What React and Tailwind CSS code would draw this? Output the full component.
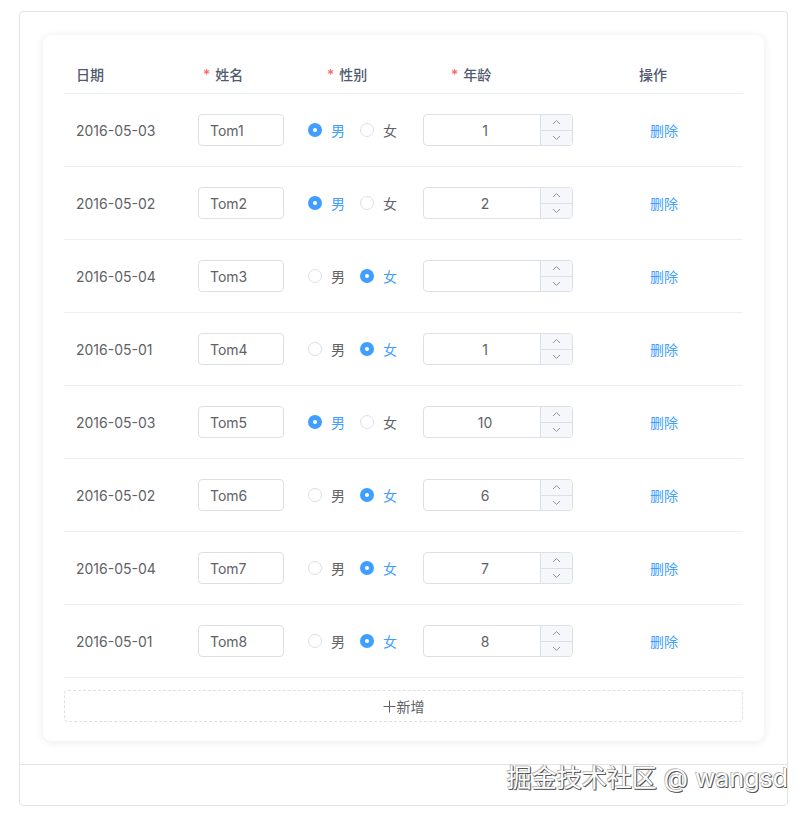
import React, { useState } from "react";

const initialRows = [
  { date: "2016-05-03", name: "Tom1", sex: "male", age: "1" },
  { date: "2016-05-02", name: "Tom2", sex: "male", age: "2" },
  { date: "2016-05-04", name: "Tom3", sex: "female", age: "" },
  { date: "2016-05-01", name: "Tom4", sex: "female", age: "1" },
  { date: "2016-05-03", name: "Tom5", sex: "male", age: "10" },
  { date: "2016-05-02", name: "Tom6", sex: "female", age: "6" },
  { date: "2016-05-04", name: "Tom7", sex: "female", age: "7" },
  { date: "2016-05-01", name: "Tom8", sex: "female", age: "8" },
];

function Required({ children }) {
  return (
    <span>
      <span className="mr-[5px] text-[#f56c6c]">*</span>
      {children}
    </span>
  );
}

function Radio({ checked, label, onClick }) {
  return (
    <label onClick={onClick} className="flex cursor-pointer items-center">
      <span
        className={
          checked
            ? "flex h-[14px] w-[14px] items-center justify-center rounded-full bg-[#409eff]"
            : "h-[14px] w-[14px] rounded-full border border-[#dcdfe6] bg-white"
        }
      >
        {checked && <span className="h-[4px] w-[4px] rounded-full bg-white" />}
      </span>
      <span className={checked ? "ml-[9px] text-[#409eff]" : "ml-[9px] text-[#606266]"}>
        {label}
      </span>
    </label>
  );
}

function Chevron({ up }) {
  return (
    <svg width="9" height="6" viewBox="0 0 9 6" fill="none">
      <path
        d={up ? "M1 5 L4.5 1.5 L8 5" : "M1 1 L4.5 4.5 L8 1"}
        stroke="#909399"
        strokeWidth="1"
      />
    </svg>
  );
}

function NumberInput({ value, onChange }) {
  return (
    <div className="flex h-[32px] w-[150px] overflow-hidden rounded border border-[#dcdfe6] bg-white">
      <input
        value={value}
        onChange={(e) => onChange(e.target.value)}
        className="w-0 flex-1 bg-transparent pl-[6px] text-center text-[14px] text-[#606266] outline-none"
      />
      <div className="flex w-[32px] flex-col border-l border-[#dcdfe6] bg-[#f5f7fa]">
        <button
          onClick={() => onChange(String((Number(value) || 0) + 1))}
          className="flex flex-1 items-center justify-center border-b border-[#dcdfe6]"
        >
          <Chevron up />
        </button>
        <button
          onClick={() => onChange(String(Math.max(0, (Number(value) || 0) - 1)))}
          className="flex flex-1 items-center justify-center"
        >
          <Chevron />
        </button>
      </div>
    </div>
  );
}

function App() {
  const [rows, setRows] = useState(initialRows);

  const update = (i, key, value) => {
    setRows((prev) => prev.map((r, idx) => (idx === i ? { ...r, [key]: value } : r)));
  };

  const remove = (i) => setRows((prev) => prev.filter((_, idx) => idx !== i));

  const add = () =>
    setRows((prev) => [
      ...prev,
      { date: "2016-05-01", name: "Tom" + (prev.length + 1), sex: "male", age: "" },
    ]);

  return (
    <div
      className="min-h-screen bg-white pl-[19px] pt-[11px] text-[14px] text-[#606266]"
      style={{ fontFamily: 'Inter, "Noto Sans CJK SC", sans-serif' }}
    >
      <div className="relative w-[769px] overflow-hidden rounded-sm border border-[#e4e4e4]">
        <div className="px-[23px] pb-[23px] pt-[23px]">
          <div className="rounded-lg bg-white px-[21px] pb-[19px] pt-[20px] shadow-[0_1px_8px_rgba(0,0,0,0.09)]">
            {/* Header */}
            <div className="flex h-[39px] items-center border-b border-[#ebeef5] font-medium text-[#515a6e]">
              <div className="w-[127px] pl-3">日期</div>
              <div className="w-[124px] pl-3">
                <Required>姓名</Required>
              </div>
              <div className="w-[124px] pl-3">
                <Required>性别</Required>
              </div>
              <div className="w-[124px] pl-3">
                <Required>年龄</Required>
              </div>
              <div className="flex-1 pl-[76px]">操作</div>
            </div>

            {/* Rows */}
            {rows.map((row, i) => (
              <div key={i} className="flex h-[73px] items-center border-b border-[#ebeef5]">
                <div className="w-[134px] pl-3">{row.date}</div>
                <div className="w-[110px]">
                  <input
                    value={row.name}
                    onChange={(e) => update(i, "name", e.target.value)}
                    className="h-[32px] w-[86px] rounded border border-[#dcdfe6] px-[11px] text-[14px] text-[#606266] outline-none"
                  />
                </div>
                <div className="flex w-[115px] items-center gap-[15px]">
                  <Radio checked={row.sex === "male"} label="男" onClick={() => update(i, "sex", "male")} />
                  <Radio checked={row.sex === "female"} label="女" onClick={() => update(i, "sex", "female")} />
                </div>
                <div className="w-[150px]">
                  <NumberInput value={row.age} onChange={(v) => update(i, "age", v)} />
                </div>
                <div className="flex-1 pl-[77px]">
                  <button onClick={() => remove(i)} className="text-[#409eff]">
                    删除
                  </button>
                </div>
              </div>
            ))}

            <button
              onClick={add}
              className="mt-[12px] flex h-[32px] w-full items-center justify-center rounded border border-dashed border-[#dcdfe6] text-[#606266]"
            >
              <svg width="13" height="13" viewBox="0 0 13 13" className="mr-[1px]">
                <path d="M6.5 0.5 V12.5 M0.5 6.5 H12.5" stroke="#606266" strokeWidth="1" />
              </svg>
              新增
            </button>
          </div>
        </div>
        <div className="h-[41px] border-t border-[#e4e4e4]" />

        <div
          className="absolute bottom-[14px] right-[-1px] whitespace-nowrap text-[25px] leading-none text-white"
          style={{
            textShadow: "1px 1px 0 #555, -1px -1px 0 #bbb, 1px 0 0 #777, 0 1px 0 #777",
          }}
        >
          掘金技术社区 @ wangsd
        </div>
      </div>
    </div>
  );
}

export default App;
